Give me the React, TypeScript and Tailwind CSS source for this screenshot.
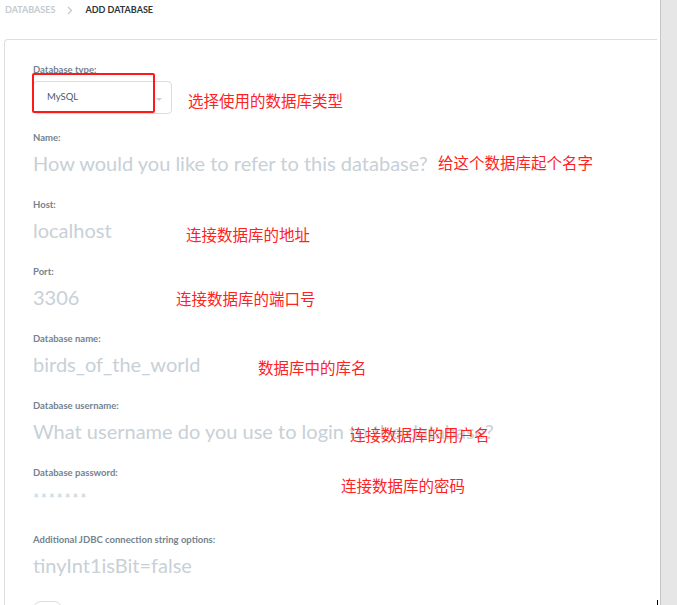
import React from "react"

type Field = {
  label: string
  value: string
  small?: boolean
}

const fields: Field[] = [
  { label: "Name:", value: "How would you like to refer to this database?" },
  { label: "Host:", value: "localhost" },
  { label: "Port:", value: "3306" },
  { label: "Database name:", value: "birds_of_the_world" },
  { label: "Database username:", value: "What username do you use to login to the database?" },
  { label: "Database password:", value: "*******", small: true },
  { label: "Additional JDBC connection string options:", value: "tinyInt1isBit=false" },
]

const notes = [
  { text: "选择使用的数据库类型", left: "left-[188px]", top: "top-[90px]" },
  { text: "给这个数据库起个名字", left: "left-[438px]", top: "top-[152px]" },
  { text: "连接数据库的地址", left: "left-[186px]", top: "top-[224px]" },
  { text: "连接数据库的端口号", left: "left-[176px]", top: "top-[288px]" },
  { text: "数据库中的库名", left: "left-[258px]", top: "top-[357px]" },
  { text: "连接数据库的用户名", left: "left-[350px]", top: "top-[424px]" },
  { text: "连接数据库的密码", left: "left-[341px]", top: "top-[475px]" },
]

function FormField({ label, value, small }: Field) {
  return (
    <div className="mb-[24px] shrink-0">
      <div className="h-[12px] text-[9.5px] leading-[12px] font-bold text-[#74838f]">{label}</div>
      <div
        className={`mt-[7px] h-[24px] leading-[24px] text-[#c8d0d7] ${
          small ? "text-[15px] tracking-[1.5px]" : "text-[20px]"
        }`}
      >
        {value}
      </div>
    </div>
  )
}

export default function App() {
  return (
    <div className="relative flex h-[605px] w-[677px] overflow-hidden bg-white font-['Lato',sans-serif]">
      <div className="flex w-[660px] flex-col">
        {/* breadcrumb */}
        <div className="flex h-[39px] shrink-0 items-start gap-[12px] pl-[5px] pt-[4px] text-[9px] font-bold leading-[12px] uppercase">
          <span className="text-[#c3cad0]">Databases</span>
          <svg width="6" height="9" viewBox="0 0 6 9" className="mt-[2px]">
            <path d="M1 1l3.5 3.5L1 8" fill="none" stroke="#c3cad0" strokeWidth="1.3" />
          </svg>
          <span className="text-[#2e353b]">Add database</span>
        </div>

        <div className="ml-[4px] mr-[3px] flex-1 shrink-0 rounded-tl-[4px] border-l-[1.5px] border-t-[1.5px] border-[#dcdfe2] pl-[28px] pt-[24px]">
          <div className="h-[12px] text-[9.5px] leading-[12px] font-bold text-[#74838f]">Database type:</div>
          <div className="mb-[18px] mt-[5px] flex h-[33px] w-[139px] items-center justify-between rounded-[4px] border border-[#d8dde1] pl-[13px] pr-[9px]">
            <span className="text-[9.5px] text-[#4c5773]">MySQL</span>
            <svg width="6" height="4" viewBox="0 0 6 4" className="mt-[4px]">
              <path d="M0 0h6L3 3z" fill="#c8d0d7" />
            </svg>
          </div>

          {fields.map(f => (
            <FormField key={f.label} {...f} />
          ))}

          <div className="h-[16px] w-[29px] rounded-full border border-[#d8dde1]" />
        </div>
      </div>

      {/* scrollbar gutter */}
      <div className="w-[17px] border-l border-[#c6c6c6] bg-[#e6e6e6]" />

      {/* annotations */}
      <div className="absolute left-[32px] top-[73px] h-[40px] w-[123px] rounded-[2px] border-2 border-[#ff1a1a]" />
      {notes.map(n => (
        <div
          key={n.text}
          className={`absolute ${n.left} ${n.top} whitespace-nowrap font-['Noto_Sans_CJK_SC',sans-serif] text-[15.5px] leading-[20px] text-[#ff2222]`}
        >
          {n.text}
        </div>
      ))}
      <div className="absolute left-[657px] top-[600px] h-[5px] w-px bg-black" />
    </div>
  )
}
